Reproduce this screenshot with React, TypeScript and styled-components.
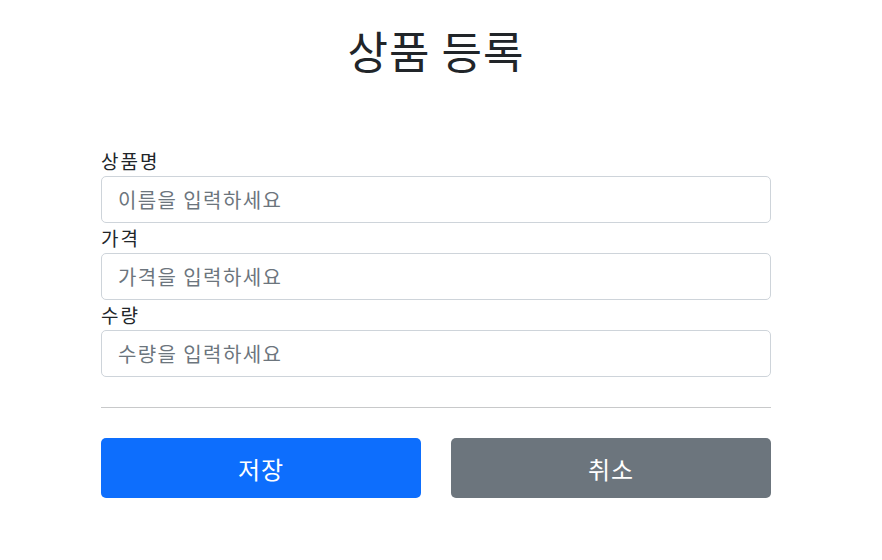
import styled, { createGlobalStyle } from "styled-components";

const GlobalStyle = createGlobalStyle`
  html, body {
    margin: 0;
    padding: 0;
    background: #fff;
  }
  body {
    font-family: "Noto Sans CJK KR", "Noto Sans", sans-serif;
    color: #212529;
  }
`;

const Container = styled.div`
  width: 670px;
  margin: 0 0 0 101px;
`;

const Header = styled.div`
  display: flex;
  justify-content: center;
  padding: 24px 0 0;
  height: 146px;
  box-sizing: border-box;
`;

const Title = styled.h2`
  margin: 0;
  font-size: 44px;
  font-weight: 400;
  line-height: 1.2;
  letter-spacing: 1px;
`;

const Field = styled.div`
  display: flex;
  flex-direction: column;
`;

const Label = styled.label`
  font-size: 19px;
  line-height: 30px;
  height: 30px;
  letter-spacing: 2px;
`;

const Input = styled.input`
  box-sizing: border-box;
  width: 100%;
  height: 47px;
  padding: 0 16px;
  border: 1px solid #ced4da;
  border-radius: 5px;
  font-family: inherit;
  font-size: 20px;
  letter-spacing: 1.4px;
  color: #212529;
  outline: none;
  &::placeholder {
    color: #6c757d;
  }
`;

const Divider = styled.hr`
  margin: 30px 0;
  border: 0;
  border-top: 1px solid #c8c9ca;
`;

const Buttons = styled.div`
  display: grid;
  grid-template-columns: 1fr 1fr;
  gap: 30px;
`;

const Button = styled.button<{ $variant: "primary" | "secondary" }>`
  height: 60px;
  border: 0;
  border-radius: 5px;
  font-family: inherit;
  font-size: 24px;
  letter-spacing: 1px;
  color: #fff;
  background: ${(p) => (p.$variant === "primary" ? "#0d6efd" : "#6c757d")};
  cursor: pointer;
`;

const fields = [
  { id: "itemName", label: "상품명", placeholder: "이름을 입력하세요" },
  { id: "price", label: "가격", placeholder: "가격을 입력하세요" },
  { id: "quantity", label: "수량", placeholder: "수량을 입력하세요" },
];

export default function App() {
  return (
    <>
      <GlobalStyle />
      <Container>
        <Header>
          <Title>상품 등록</Title>
        </Header>
        <form onSubmit={(e) => e.preventDefault()}>
          {fields.map((f) => (
            <Field key={f.id}>
              <Label htmlFor={f.id}>{f.label}</Label>
              <Input id={f.id} type="text" placeholder={f.placeholder} />
            </Field>
          ))}
          <Divider />
          <Buttons>
            <Button $variant="primary" type="submit">저장</Button>
            <Button $variant="secondary" type="button">취소</Button>
          </Buttons>
        </form>
      </Container>
    </>
  );
}
